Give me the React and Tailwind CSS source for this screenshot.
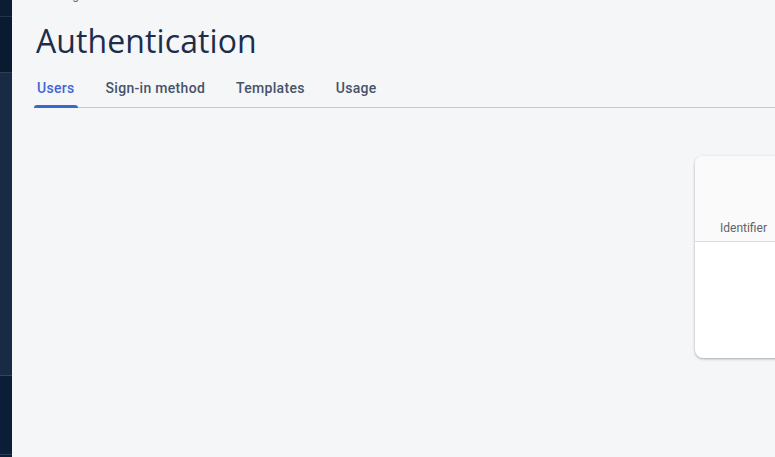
import React from 'react';

const tabs = ['Users', 'Sign-in method', 'Templates', 'Usage'];

const App = () => {
  return (
    <div className="flex h-[457px] w-[775px] overflow-hidden bg-[#f5f6f8]">
      {/* Sidebar strip */}
      <div className="flex w-[12px] shrink-0 flex-col">
        <div className="h-[17px] border-b border-[#22344d] bg-[#0b1c33]"></div>
        <div className="h-[56px] border-b border-[#2d3e57] bg-[#0a1a31]"></div>
        <div className="h-[303px] border-b border-[#34455e] bg-[#192a44]"></div>
        <div className="h-[79px] border-b border-[#2d3e57] bg-[#0c1d36]"></div>
        <div className="flex-1 bg-[#0c1d36]"></div>
      </div>

      {/* Main */}
      <div className="relative flex-1 overflow-hidden font-['Roboto',sans-serif]">
        <div className="-mt-[13px] pl-[24px] text-xs leading-4 text-[#5f6b7c]">Building</div>

        <h1 className="mt-[18px] pl-[24px] font-['Open_Sans',sans-serif] text-[32px] leading-[40px] tracking-[0.1px] text-[#1d2d4a]">
          Authentication
        </h1>

        <div className="ml-[22px] mt-[19px] flex gap-[25px] border-b border-[#c5cbd3]">
          {tabs.map((t, i) => (
            <button
              key={t}
              className={`px-[3px] pb-[11px] text-sm font-medium leading-4 tracking-[0.3px] ${
                i === 0
                  ? 'relative text-[#4066d4]'
                  : 'text-[#46536a]'
              }`}
            >
              {t}
              {i === 0 && (
                <span className="absolute bottom-[-1px] left-0 right-0 h-[3px] rounded-t-[3px] bg-[#3a66d0]"></span>
              )}
            </button>
          ))}
        </div>

        {/* Users table card */}
        <div className="pl-[683px] pt-[48px]">
          <div className="w-[400px] overflow-hidden rounded-[8px] bg-white shadow-[0_1px_3px_rgba(60,64,67,0.3),0_1px_2px_rgba(60,64,67,0.15)]">
            <div className="flex h-[86px] items-end border-b border-[#dadce0] bg-[#fafafa] pb-[5px] pl-[25px]">
              <span className="text-xs text-[#5f6368]">Identifier</span>
            </div>
            <div className="h-[116px]"></div>
          </div>
        </div>
      </div>
    </div>
  );
};

export default App;
